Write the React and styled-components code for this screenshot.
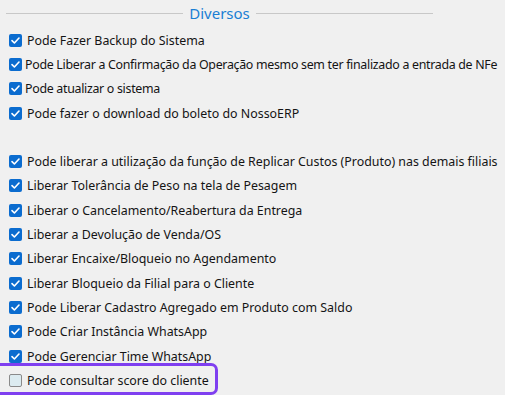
import React from 'react'
import styled, { createGlobalStyle } from 'styled-components'

const GlobalStyle = createGlobalStyle`
body {
  margin: 0;
  background: #f0f0f0;
  font-family: "Noto Sans", "Open Sans", sans-serif;
}
`;

const Panel = styled.div`
  width: 505px;
  height: 395px;
  overflow: hidden;
  background: #f0f0f0;
  padding: 3px 0 0 0;
  box-sizing: border-box;
`;

const Legend = styled.div`
  display: flex;
  align-items: center;
  width: 427px;
  margin-left: 6px;
  gap: 6px;
  height: 20px;
`;

const Line = styled.div`
  flex: 1;
  height: 1px;
  background: #c8c8c8;
`;

const LegendText = styled.span`
  font-size: 15px;
  color: #1a7fd4;
  line-height: 20px;
`;

const List = styled.div`
  display: flex;
  flex-direction: column;
  padding-top: 5px;
`;

const Item = styled.label`
  position: relative;
  display: inline-flex;
  align-self: flex-start;
  align-items: center;
  height: 24.3px;
  padding-left: 9px;
  margin-top: ${p => (p.$gap ? '24.3px' : '0')};
  font-size: 12.4px;
  color: #141414;
  letter-spacing: ${p => (p.$tight ? '-0.3px' : '0')};
  white-space: nowrap;

  ${p => p.$focus && `
    &::after {
      content: "";
      position: absolute;
      left: -7px;
      right: -9px;
      top: -5px;
      bottom: -3px;
      border: 3px solid #7f3ff0;
      border-radius: 7px;
    }
  `}
`;

const Box = styled.span`
  width: 13px;
  height: 13px;
  box-sizing: border-box;
  border-radius: 2px;
  margin-right: ${p => (p.$tight ? '3px' : '5px')};
  flex-shrink: 0;
  display: flex;
  align-items: center;
  justify-content: center;
  background: ${p => (p.$checked ? '#0b6ccf' : '#dcebf0')};
  border: ${p => (p.$checked ? 'none' : '1px solid #8a8a8a')};
`;

const Check = () => (
  <svg width="11" height="11" viewBox="0 0 11 11">
    <path d="M2 5.6 L4.4 8 L9 3" fill="none" stroke="#fff" strokeWidth="1.6" strokeLinecap="round" strokeLinejoin="round" />
  </svg>
);

const items = [
  { text: 'Pode Fazer Backup do Sistema', checked: true },
  { text: 'Pode Liberar a Confirmação da Operação mesmo sem ter finalizado a entrada de NFe', checked: true, tight: true },
  { text: 'Pode atualizar o sistema', checked: true, tight: true },
  { text: 'Pode fazer o download do boleto do NossoERP', checked: true },
  { text: 'Pode liberar a utilização da função de Replicar Custos (Produto) nas demais filiais', checked: true, gap: true },
  { text: 'Liberar Tolerância de Peso na tela de Pesagem', checked: true },
  { text: 'Liberar o Cancelamento/Reabertura da Entrega', checked: true },
  { text: 'Liberar a Devolução de Venda/OS', checked: true },
  { text: 'Liberar Encaixe/Bloqueio no Agendamento', checked: true },
  { text: 'Liberar Bloqueio da Filial para o Cliente', checked: true },
  { text: 'Pode Liberar Cadastro Agregado em Produto com Saldo', checked: true },
  { text: 'Pode Criar Instância WhatsApp', checked: true },
  { text: 'Pode Gerenciar Time WhatsApp', checked: true },
  { text: 'Pode consultar score do cliente', checked: false, focus: true },
];

const App = () => {
  return (
    <Panel>
      <GlobalStyle />
      <Legend>
        <Line />
        <LegendText>Diversos</LegendText>
        <Line />
      </Legend>
      <List>
        {items.map(it => (
          <Item key={it.text} $gap={it.gap} $tight={it.tight} $focus={it.focus}>
            <Box $checked={it.checked} $tight={it.tight}>{it.checked && <Check />}</Box>
            {it.text}
          </Item>
        ))}
      </List>
    </Panel>
  )
}

export default App;
